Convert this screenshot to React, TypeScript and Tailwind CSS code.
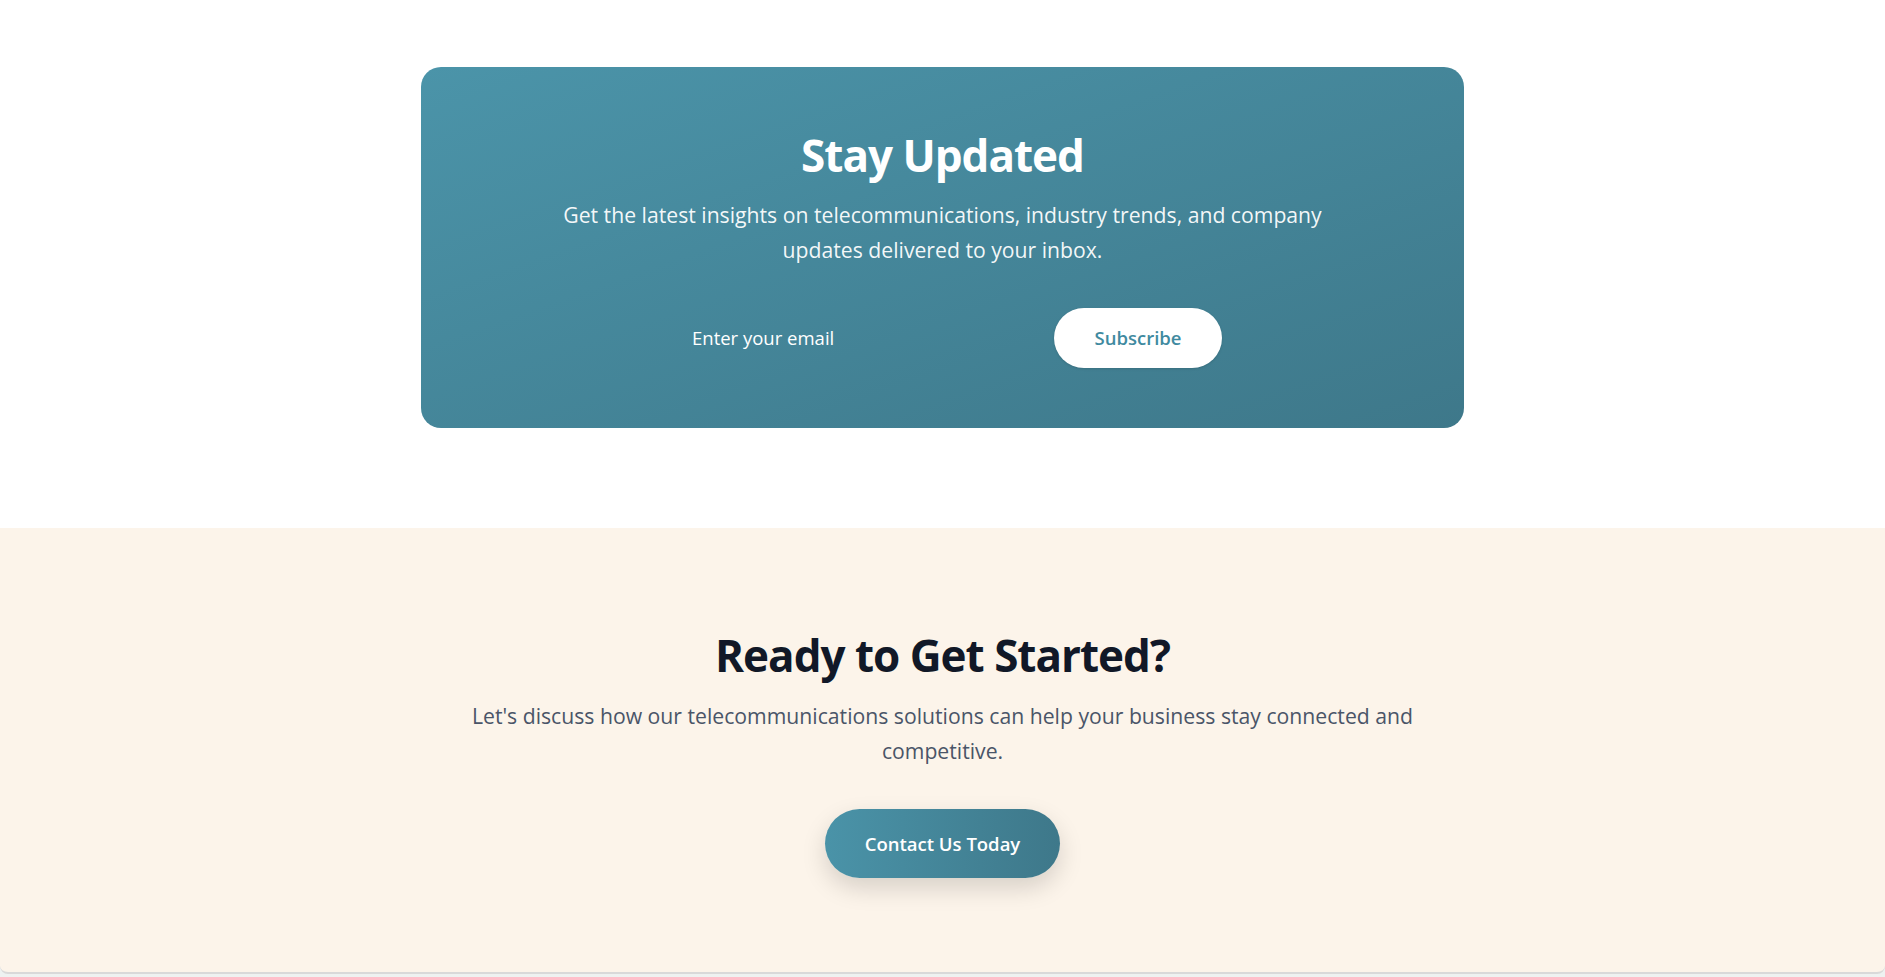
import React, { useState } from 'react'

// Newsletter signup + closing call to action
const Newsletter = () => {
  const [email, setEmail] = useState('')

  const handleSubmit = (e: React.FormEvent) => {
    e.preventDefault()
    setEmail('')
  }

  return (
    <section className="bg-white px-4 pt-[67px] pb-[100px]">
      <div className="mx-auto w-[1043px] rounded-[20px] bg-gradient-to-br from-[#4b94a9] to-[#3e788a] px-16 pt-[62px] pb-[60px] text-center text-white">
        <h2 className="text-[44px] leading-[52px] font-bold tracking-[-1px]">Stay Updated</h2>
        <p className="mx-auto mt-[16px] max-w-[800px] text-[21.2px] leading-[35px] text-white/95">
          Get the latest insights on telecommunications, industry trends, and company updates delivered to your inbox.
        </p>
        {/* Email form */}
        <div className="mt-[41px] flex justify-center pl-[5px]">
          <form onSubmit={handleSubmit} className="flex items-center gap-4">
            <input
              type="email"
              value={email}
              onChange={(e) => setEmail(e.target.value)}
              placeholder="Enter your email"
              className="w-[370px] bg-transparent px-6 py-4 text-[18.5px] text-white outline-none placeholder:text-white"
            />
            <button
              type="submit"
              className="h-[60px] w-[168px] rounded-full bg-white text-[18.5px] font-semibold text-[#3f8aa0] shadow-sm"
            >
              Subscribe
            </button>
          </form>
        </div>
      </div>
    </section>
  )
}

const CallToAction = () => {
  return (
    <section className="rounded-b-lg border-b-2 border-[#d9d9d9] bg-[#fcf4ea] px-4 pt-[101px] pb-[94px] text-center">
      <h2 className="text-[44px] leading-[52px] font-bold tracking-[-1px] text-[#111827]">Ready to Get Started?</h2>
      <p className="mx-auto mt-[17px] max-w-[1000px] text-[21.2px] leading-[35px] text-[#4a5568]">
        Let's discuss how our telecommunications solutions can help your business stay connected and competitive.
      </p>
      <button className="mt-[41px] h-[69px] rounded-full bg-gradient-to-r from-[#4a93a8] to-[#3e788a] px-10 text-[18.5px] font-semibold text-white shadow-[0_10px_25px_rgba(0,0,0,0.15)]">
        Contact Us Today
      </button>
    </section>
  )
}

export default function App() {
  return (
    <div className="min-h-screen bg-[#eef2f1] font-['Open_Sans',sans-serif]">
      <Newsletter />
      <CallToAction />
    </div>
  )
}
